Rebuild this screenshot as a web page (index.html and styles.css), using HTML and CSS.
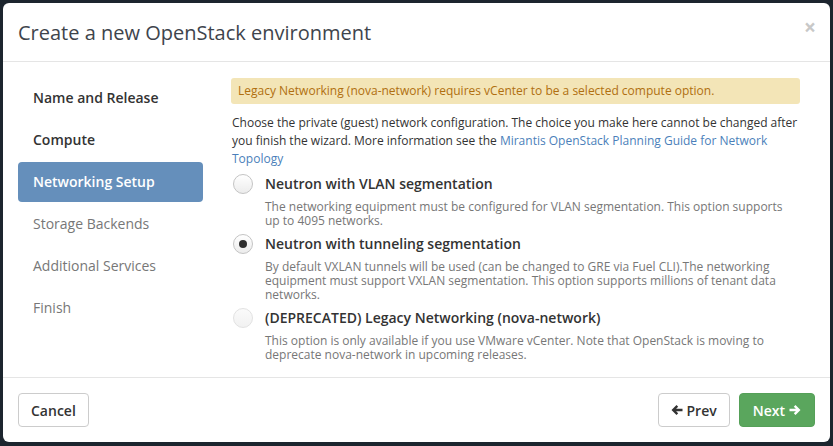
FILE: index.html
```html
<!DOCTYPE html>
<html>
<head>
<meta charset="utf-8">
<link rel="stylesheet" href="styles.css">
</head>
<body>
<div class="modal">
  <div class="modal-header">
    <h4 class="modal-title">Create a new OpenStack environment</h4>
    <span class="close">&times;</span>
  </div>
  <div class="modal-body">
    <ul class="nav">
      <li class="done">Name and Release</li>
      <li class="done">Compute</li>
      <li class="active">Networking Setup</li>
      <li>Storage Backends</li>
      <li>Additional Services</li>
      <li>Finish</li>
    </ul>
    <div class="content">
      <div class="alert">Legacy Networking (nova-network) requires vCenter to be a selected compute option.</div>
      <p class="intro">Choose the private (guest) network configuration. The choice you make here cannot be changed after you finish the wizard. More information see the <a href="#">Mirantis OpenStack Planning Guide for Network Topology</a></p>
      <div class="option">
        <span class="radio"></span>
        <div class="opt-text">
          <div class="opt-label">Neutron with VLAN segmentation</div>
          <div class="opt-desc">The networking equipment must be configured for VLAN segmentation. This option supports up to 4095 networks.</div>
        </div>
      </div>
      <div class="option">
        <span class="radio checked"></span>
        <div class="opt-text">
          <div class="opt-label">Neutron with tunneling segmentation</div>
          <div class="opt-desc">By default VXLAN tunnels will be used (can be changed to GRE via Fuel CLI).The networking equipment must support VXLAN segmentation. This option supports millions of tenant data networks.</div>
        </div>
      </div>
      <div class="option">
        <span class="radio disabled"></span>
        <div class="opt-text">
          <div class="opt-label">(DEPRECATED) Legacy Networking (nova-network)</div>
          <div class="opt-desc">This option is only available if you use VMware vCenter. Note that OpenStack is moving to deprecate nova-network in upcoming releases.</div>
        </div>
      </div>
    </div>
  </div>
  <div class="modal-footer">
    <button class="btn">Cancel</button>
    <div class="right">
      <button class="btn"><svg class="arrow" viewBox="0 0 12 12" width="12" height="12"><path d="M0.5 6 L5.5 1 L7.2 2.7 L5.1 4.7 H11.5 V7.3 H5.1 L7.2 9.3 L5.5 11 Z" fill="#333"/></svg>Prev</button>
      <button class="btn btn-success">Next<svg class="arrow after" viewBox="0 0 12 12" width="12" height="12"><path d="M11.5 6 L6.5 1 L4.8 2.7 L6.9 4.7 H0.5 V7.3 H6.9 L4.8 9.3 L6.5 11 Z" fill="#fff"/></svg></button>
    </div>
  </div>
</div>
</body>
</html>
```
FILE: styles.css
```css
* { box-sizing: border-box; }
html, body { margin: 0; padding: 0; }
body {
  background: #1c252e;
  font-family: "Open Sans", "Liberation Sans", sans-serif;
  color: #333;
  width: 833px;
  height: 446px;
  overflow: hidden;
  padding: 3px 3px 0 3px;
}
.modal {
  width: 827px;
  height: 439px;
  background: #fff;
  border-radius: 6px;
  display: flex;
  flex-direction: column;
}
.modal-header {
  height: 59px;
  border-bottom: 1px solid #e5e5e5;
  display: flex;
  align-items: center;
  justify-content: space-between;
  padding: 0 15px;
}
.modal-title {
  margin: 0;
  font-size: 20px;
  font-weight: 400;
  color: #3e444c;
  line-height: 1;
  padding-top: 2px;
}
.close {
  font-size: 21px;
  font-weight: 700;
  color: #c8c8c8;
  line-height: 1;
  margin-top: -10px;
  margin-right: -1px;
}
.modal-body {
  height: 315px;
  display: flex;
  padding: 16px 30px 0 15px;
}
.nav {
  list-style: none;
  margin: 0;
  padding: 0;
  width: 185px;
  flex: none;
}
.nav li {
  height: 40px;
  line-height: 40px;
  margin-bottom: 2px;
  padding: 0 15px;
  font-size: 14px;
  color: #777;
  border-radius: 4px;
}
.nav li.done { font-weight: 600; color: #333; }
.nav li.active { font-weight: 600; color: #fff; background: #658fbb; }
.content {
  margin-left: 28px;
  flex: 1;
}
.alert {
  background: #f3e5b7;
  color: #b06f0f;
  border-radius: 3px;
  height: 26px;
  line-height: 26px;
  font-size: 12px;
  padding: 0 7px;
}
.intro {
  font-size: 12px;
  line-height: 18px;
  margin: 10px 0 0 0;
  padding-left: 1px;
  color: #333;
}
.intro a { color: #4b7fba; text-decoration: none; }
.option {
  display: flex;
  margin-top: 6px;
}
.radio {
  flex: none;
  width: 20px;
  height: 20px;
  border-radius: 50%;
  border: 1px solid #c4c4c4;
  background: linear-gradient(#fff, #ececec);
  margin: 0 12px 0 2px;
  position: relative;
}
.radio.checked::after {
  content: "";
  position: absolute;
  width: 8px;
  height: 8px;
  border-radius: 50%;
  background: #2f2f2f;
  left: 5px;
  top: 5px;
}
.radio.disabled {
  border-color: #e2e2e2;
  background: linear-gradient(#fafafa, #f1f1f1);
}
.opt-label {
  font-size: 14px;
  font-weight: 600;
  line-height: 20px;
  color: #333;
}
.opt-desc {
  font-size: 12px;
  line-height: 14px;
  color: #777;
  margin-top: 6px;
}
.modal-footer {
  flex: 1;
  border-top: 1px solid #e5e5e5;
  display: flex;
  align-items: flex-start;
  justify-content: space-between;
  padding: 15px 15px 0 15px;
}
.right { display: flex; gap: 9px; }
.btn {
  font-family: "Open Sans", "Liberation Sans", sans-serif;
  font-size: 14px;
  font-weight: 600;
  height: 34px;
  padding: 0 12px;
  border: 1px solid #ccc;
  border-radius: 4px;
  background: #fff;
  color: #333;
  display: flex;
  align-items: center;
}
.btn-success {
  background: #5aa65d;
  border-color: #55a058;
  color: #fff;
  padding: 0 13px 0 13px;
}
.arrow { margin-right: 4px; }
.arrow.after { margin-right: 0; margin-left: 4px; }
```
